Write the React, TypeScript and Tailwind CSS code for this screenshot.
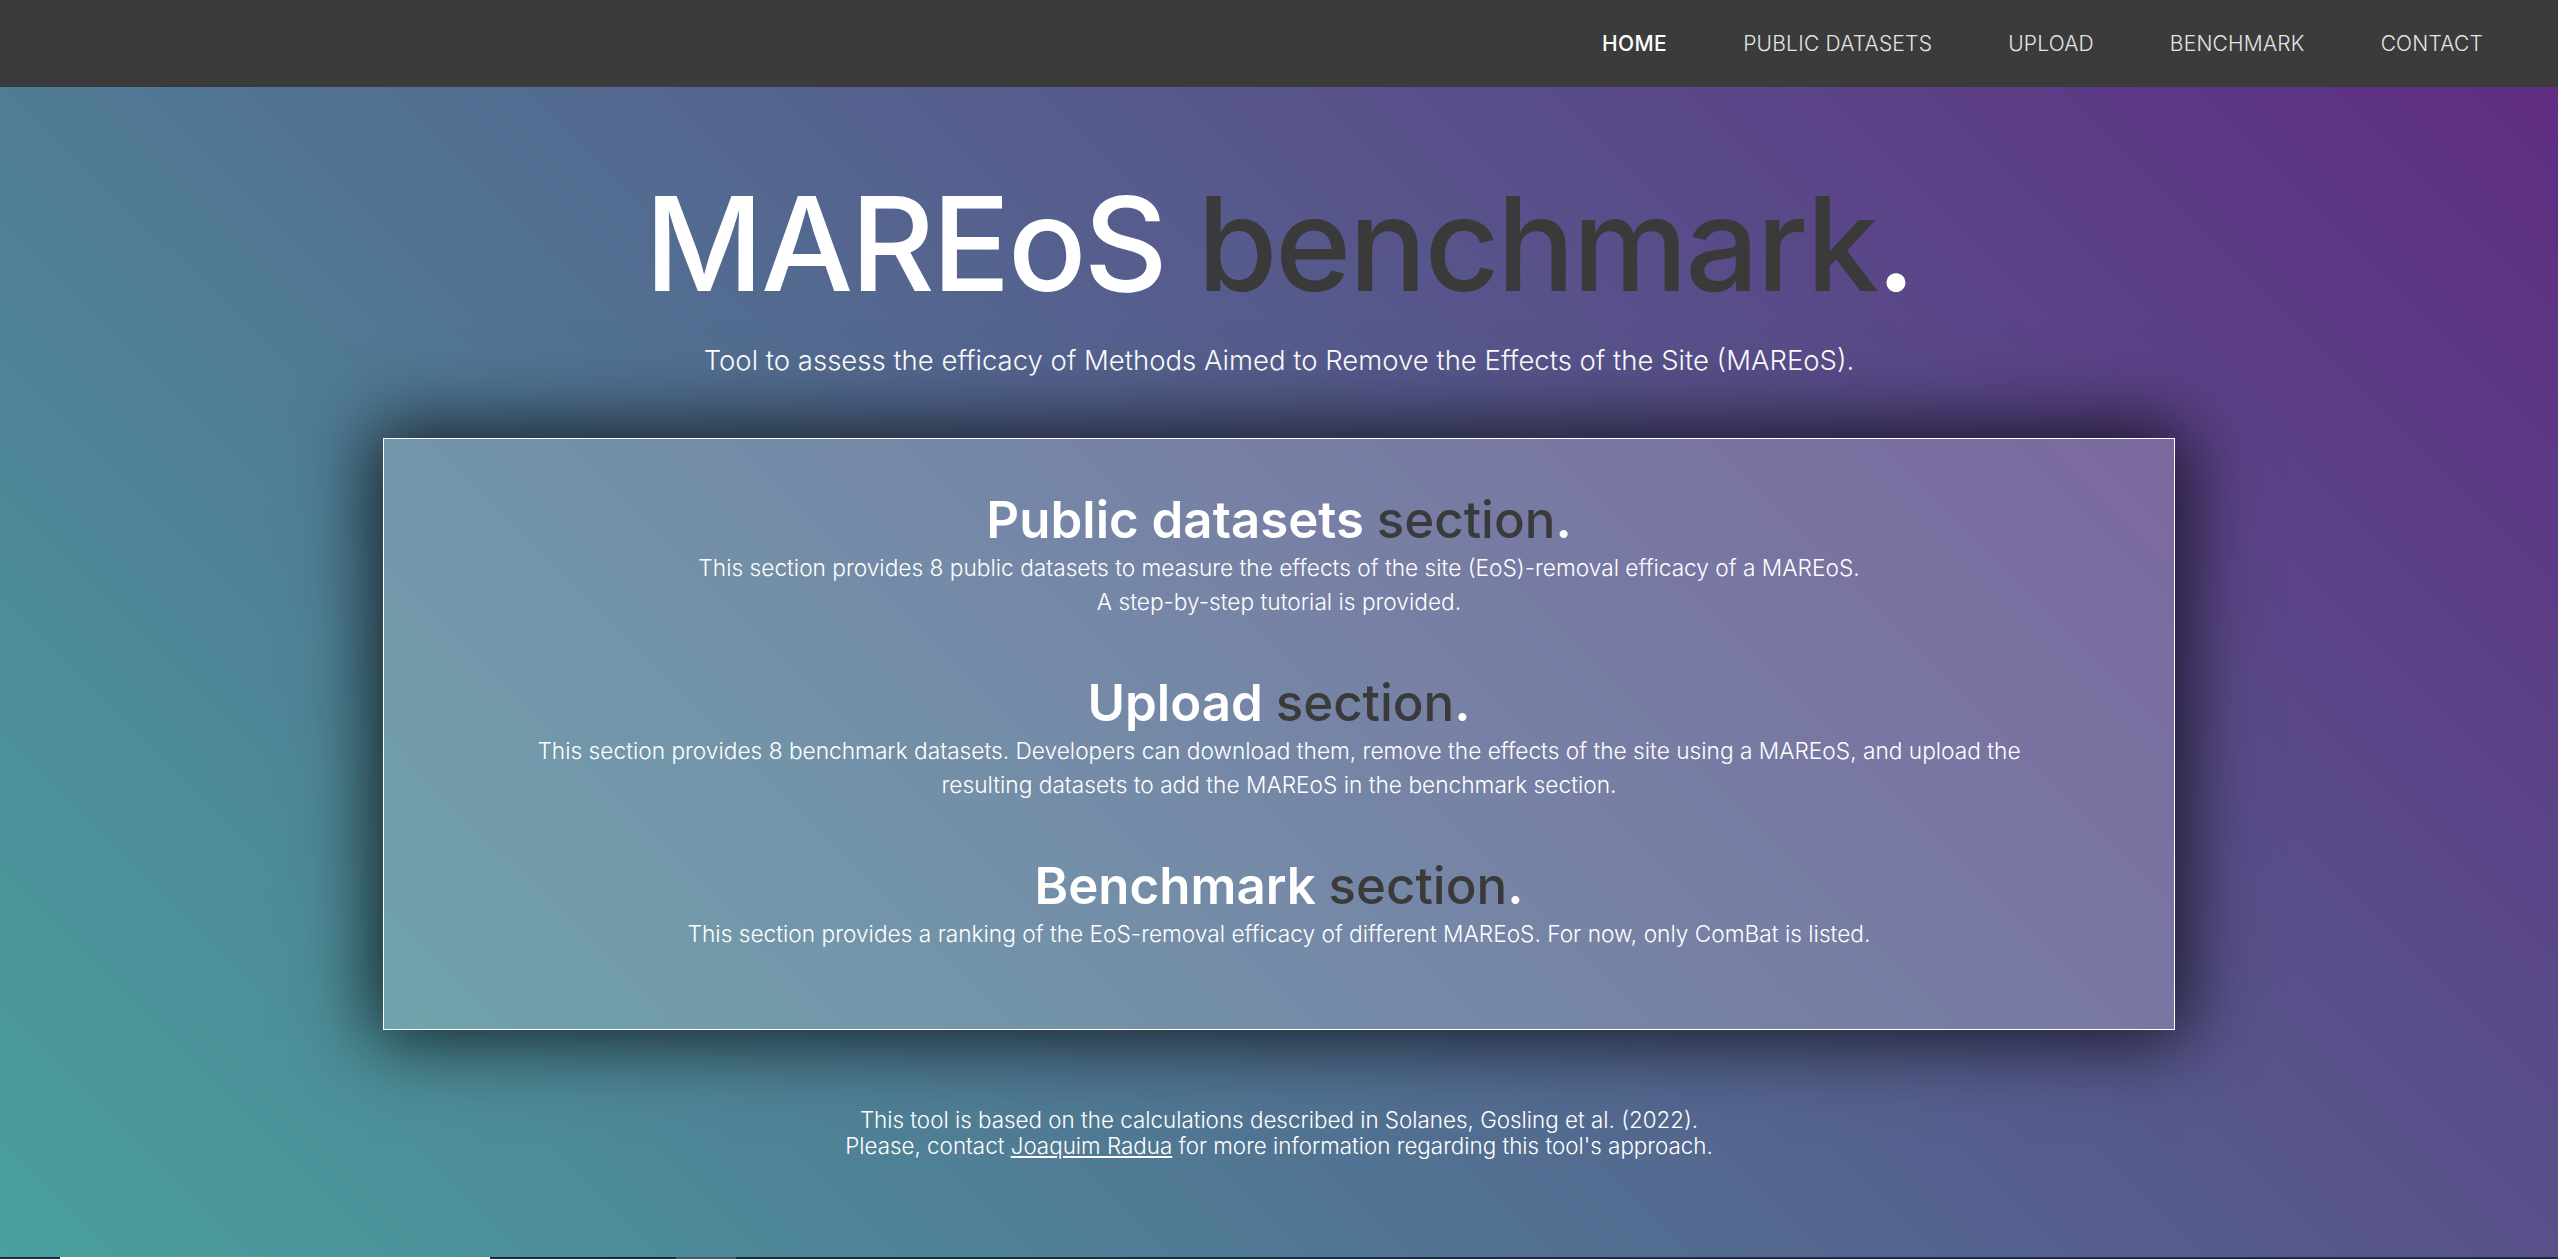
import React from 'react';

const navItems = ['HOME', 'PUBLIC DATASETS', 'UPLOAD', 'BENCHMARK', 'CONTACT'];

const sections = [
  {
    title: 'Public datasets',
    lines: [
      'This section provides 8 public datasets to measure the effects of the site (EoS)-removal efficacy of a MAREoS.',
      'A step-by-step tutorial is provided.',
    ],
  },
  {
    title: 'Upload',
    lines: [
      'This section provides 8 benchmark datasets. Developers can download them, remove the effects of the site using a MAREoS, and upload the',
      'resulting datasets to add the MAREoS in the benchmark section.',
    ],
  },
  {
    title: 'Benchmark',
    lines: ['This section provides a ranking of the EoS-removal efficacy of different MAREoS. For now, only ComBat is listed.'],
  },
];

const App: React.FC = () => {
  return (
    <div className="w-full min-h-screen font-['Inter','Open_Sans',sans-serif] text-white">
      <nav className="h-[87px] bg-[#3b3b3b] flex items-center justify-end pr-[75px] gap-[76px]">
        {navItems.map((item, i) => (
          <a
            key={item}
            href="#"
            className={
              i === 0
                ? 'text-[21px] font-medium text-white tracking-[0.02em]'
                : 'text-[21px] font-light text-[#e4e4e4] tracking-[0.01em]'
            }
          >
            {item}
          </a>
        ))}
      </nav>

      <section className="h-[1170px] bg-[linear-gradient(45deg,#49a09d,#5f2c82)] flex flex-col items-center pt-[92px]">
        <h1 className="text-[130px] leading-none font-medium tracking-[-0.02em]">
          MAREoS <span className="text-[#3a3a3a]">benchmark</span>.
        </h1>
        <p className="mt-[32px] text-[27.5px] leading-[39px] font-light">
          Tool to assess the efficacy of Methods Aimed to Remove the Effects of the Site (MAREoS).
        </p>

        <div className="mt-[58px] w-[1792px] border border-white bg-white/20 shadow-[0_0_70px_10px_rgba(0,0,0,0.75)] pt-[49px] pb-[78px] flex flex-col items-center text-center">
          {sections.map((s, i) => (
            <div key={s.title} className={i === 0 ? 'flex flex-col items-center' : 'flex flex-col items-center mt-[52px]'}>
              <h2 className="text-[51px] leading-[63px] font-semibold">
                {s.title} <span className="font-medium text-[#3a3a3a]">section</span>.
              </h2>
              <div className="text-[22.7px] leading-[34px] font-light">
                {s.lines.map((l) => (
                  <p key={l}>{l}</p>
                ))}
              </div>
            </div>
          ))}
        </div>

        <div className="mt-[77px] text-[22.4px] leading-[26px] font-light text-center">
          <p>This tool is based on the calculations described in Solanes, Gosling et al. (2022).</p>
          <p>
            Please, contact{' '}
            <a href="#" className="underline underline-offset-2">
              Joaquim Radua
            </a>{' '}
            for more information regarding this tool's approach.
          </p>
        </div>
      </section>

      <div className="h-[2px] bg-[#182a48] flex">
        <div className="ml-[60px] w-[430px] bg-white" />
        <div className="ml-[186px] w-[60px] bg-[#4a5570]" />
      </div>
    </div>
  );
};

export default App;
